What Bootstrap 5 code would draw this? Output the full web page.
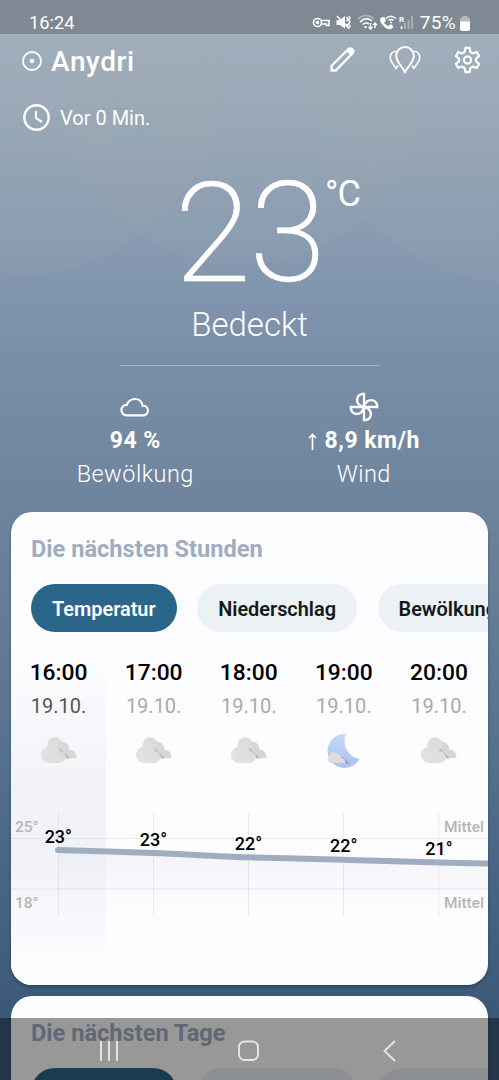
<!DOCTYPE html>
<html lang="de">
<head>
<meta charset="utf-8">
<meta name="viewport" content="width=device-width, initial-scale=1">
<title>Wetter Anydri</title>
<link href="https://cdn.jsdelivr.net/npm/bootstrap@5.3.0/dist/css/bootstrap.min.css" rel="stylesheet">
<style>
html,body{height:1080px;overflow:hidden}
body{font-family:Roboto,"Liberation Sans",sans-serif;line-height:1;color:#fff;white-space:nowrap}
svg{display:block;flex:none}
.app-screen{height:1080px;isolation:isolate;background:linear-gradient(#a1afc0 34px,#98a8b9 110px,#8d9fb3 200px,#8296ae 280px,#7a8fa8 350px,#6e849d 500px,#5c7691 700px,#456382 900px,#3c5a78 1010px)}
.sky{z-index:-1}
.status-bar{height:34px;background:#7f8994;padding:12px 28px 0 29px;font-size:18.3px}
.status-icons{height:22px}
.top-bar{height:54px;padding:0 18px 0 22px}
.place{font-size:28px;font-weight:500;letter-spacing:.6px;margin-left:9px;line-height:52px;padding-top:1px}
.updated{height:58px;padding-left:23px;font-size:20px}
.now{height:155px}
.deg{font-size:139px;font-weight:200;line-height:116px;letter-spacing:-1.5px;padding-top:30px;-webkit-text-stroke:.6px #fff}
.unit{left:325px;top:30px;font-size:36px;font-weight:400;letter-spacing:-1px}
.cond{height:64px;font-size:33px;font-weight:300;line-height:48px}
.rule{width:260px;height:1px;background:#ffffff50;margin:0 auto}
.stats{height:146px;padding:25px 21px 0}
.stat-val{font-size:23px;font-weight:700;line-height:36px;letter-spacing:.5px}
.stat-name{font-size:23.5px;font-weight:300;line-height:30px;letter-spacing:.45px}
.panel{margin:0 11px;border-radius:21px;background:#fdfdff;box-shadow:0 2px 3px #0d264566}
.hours-panel{height:473px}
.days-panel{height:120px;margin-top:11px}
.panel-title{height:72px;padding:25px 20px 0;font-size:23.6px;line-height:25px;font-weight:700;color:#9fadc1}
.pills{gap:20.5px;padding-left:20px}
.chip{height:48px;padding:0 21px;border-radius:24px;background:#ebf1f4;color:#14181b;font-size:19.9px;font-weight:600;line-height:51px;flex:none}
.chip.on{background:#2a658a;color:#fff}
.hour{width:95.1px;flex:none;padding-top:24px;text-align:center;color:#aaa;height:353px}
.hour.cur{color:#555;background:linear-gradient(#fdfdff 5%,#f2f3f8 45%,#f2f3f8 65%,#fdfdff 96%)}
.hour-time{color:#000;font-size:22.8px;font-weight:500;line-height:33px}
.dt{font-size:20px;line-height:34px}
.hour svg{margin:14px auto 0}
.hour .moon{margin-top:11px}
.chart{left:0;top:278px}
.nav-shade{left:0;bottom:0;height:62px;background:#00000066}
</style>
<script src="https://cdn.jsdelivr.net/npm/bootstrap@5.3.0/dist/js/bootstrap.bundle.min.js"></script>
</head>
<body>
<svg width="0" height="0" class="position-absolute"><defs>
<linearGradient id="cl" x1="0" y1="26" x2="24" y2="4" gradientUnits="userSpaceOnUse"><stop offset="0" stop-color="#e3e3e3"/><stop offset="1" stop-color="#dadad8"/></linearGradient>
<linearGradient id="mo" x1="0" y1="0" x2="0" y2="1"><stop offset="0" stop-color="#c5d8f7"/><stop offset="1" stop-color="#abc2f1"/></linearGradient>
<linearGradient id="fade" x1="0" y1="0" x2="0" y2="1"><stop offset="0" stop-color="#e9e9f2" stop-opacity=".6"/><stop offset="1" stop-color="#f4f4fa" stop-opacity="0"/></linearGradient>
<symbol id="cloud" viewBox="0 0 36 26"><path d="M17 5C22 3 28.500 6 28.500 13C32 12.500 35.500 15 35.500 21H18Z" fill="#d6d6d4"/><g fill="url(#cl)"><circle cx="8" cy="18" r="8"/><circle cx="14" cy="7.800" r="7.600"/><circle cx="18" cy="19" r="7"/><path d="M7 8H20V19L18 26H8L5 14Z"/></g><path d="M17.500 10L29 21.500H25.500C25 18 23 15.500 20 14L17.800 14.500L19 13Z" fill="#b3b3b2"/></symbol>
</defs></svg>
<main class="app-screen position-relative overflow-hidden">
<svg class="sky position-absolute top-0 start-0" width="499" height="512" fill="#aab4b0" fill-opacity=".1">
<circle cx="17" cy="70" r="206"/><circle cx="242" cy="86" r="180"/><circle cx="520" cy="66" r="217"/>
<g fill-opacity=".05"><circle cx="60" cy="-12" r="160"/><circle cx="235" cy="4" r="156"/><circle cx="440" cy="36" r="144"/></g>
</svg>

<header class="status-bar d-flex justify-content-between align-items-start"><span style="line-height:22px">16:24</span>
<div class="status-icons d-flex align-items-center">
<svg width="108" height="22" viewBox="312 12 108 22" fill="none" stroke="#fff" stroke-width="1.600">
<circle cx="317.500" cy="22.500" r="4"/><circle cx="317.500" cy="22.500" r="1" fill="#fff"/><path d="M321 20.500H329V25.500H326.500V24H321"/>
<path d="M336.500 20H340L345 16V28.500L340 25H336.500Z" fill="#fff" stroke="none"/><path d="M337 16L349 28.500" stroke-width="1.700"/><path d="M346.500 17L348 19L346.500 21M346.500 24L348 26M349 16L350 18L348.500 20L350 22L348.500 24L350 26L349 28" stroke-width="1.400"/>
<path d="M358 19C363 14.500 369 14.500 374 19" opacity=".4"/><path d="M360 22C364 18 368.500 18 372 21M362.500 24.500C365 22.500 367 22.500 369 24"/><circle cx="365.500" cy="27" r="1.200" fill="#fff" stroke="none"/><path d="M370.500 23V28.500M368.500 27L370.500 29L372.500 27M375 28V23M373 25L375 23L377 25" stroke-width="1.400"/>
<path d="M381 17.500L384.500 17L386 21L384 22.500C385 24.500 386.500 25.500 388.500 26L390.500 24L393.500 26.500C391.500 30.500 387 29.500 384 26.500C380.500 23 379 20 381 17.500Z" fill="#fff" stroke="none"/><path d="M386 18.500C389 15.500 392.500 15.500 396 18.500M388.500 20.500C390.500 19 392 19 393.500 20.500" stroke-width="1.400"/><circle cx="391" cy="22.500" r="1" fill="#fff" stroke="none"/>
<text x="399" y="21.500" font-size="8" font-weight="700" fill="#fff" stroke="none">R</text><path d="M401.500 26V29" stroke-width="1.500"/><path d="M405 23V29M408.500 19.500V29M412 16V29" opacity=".38" stroke-width="1.700"/>
</svg><span style="line-height:22px;font-size:19px;letter-spacing:.3px">75%</span>
<svg style="margin-left:4px;margin-right:1px" width="10" height="15" viewBox="0 0 10 15"><path d="M2.500 0H7.500V1.500C9 1.500 10 2 10 3.500V6H0V3.500C0 2 1 1.500 2.500 1.500Z" fill="#fff" opacity=".42"/><path d="M0 5.500H10V13Q10 15 8 15H2Q0 15 0 13Z" fill="#fff"/></svg>
</div></header>

<div class="top-bar d-flex align-items-center justify-content-between">
<div class="d-flex align-items-center"><svg width="20" height="20" viewBox="0 0 20 20"><circle cx="10" cy="10" r="9" fill="none" stroke="#fff" stroke-width="1.800"/><circle cx="10" cy="10" r="2.300" fill="#fff"/></svg><span class="place">Anydri</span></div>
<div class="d-flex align-items-center" style="height:54px;padding-bottom:3px">
<svg width="25" height="25" viewBox="0 0 24 24" fill="none" stroke="#fff" stroke-width="2.300" stroke-linejoin="round"><path d="M1.500 22.500V18L17.800 1.900Q19.500.7 21.200 2.100T22.100 5.500L5.700 22.500Z"/><path d="M15.500 3.800L20.200 8.500L22.500 5.500Q23.500 3 21 1.600T18 1.800Z" fill="#fff" stroke="none"/></svg>
<svg style="margin-left:34px" width="32" height="28" viewBox="0 0 32 28" fill="none" stroke="#fff" stroke-width="2" stroke-linejoin="round"><path d="M16 26.500C14.500 21 7.200 17 7.200 9.800A8.800 8.800 0 0 1 24.800 9.800C24.800 17 17.500 21 16 26.500Z"/><path d="M7 5.200C3 5.500 1.200 8 1.200 12C1.200 16 5 18 7 22.500L9 19.500M25 5.200C29 5.500 30.800 8 30.800 12C30.800 16 27 18 25 22.500L23 19.500" stroke-width="1.600"/></svg>
<svg style="margin-left:33px" width="27" height="28" viewBox="0 0 28 28" fill="none" stroke="#fff" stroke-width="2.300" stroke-linejoin="round"><path d="M11.800 1.500H16.200L17 5.800L19.600 7.200L23.500 5.700L26 10L22.800 12.600V15.400L26 18L23.500 22.300L19.600 20.800L17 22.200L16.200 26.500H11.800L11 22.200L8.400 20.800L4.500 22.300L2 18L5.200 15.400V12.600L2 10L4.500 5.700L8.400 7.200L11 5.800Z"/><circle cx="14" cy="14" r="3.700"/></svg>
</div></div>

<div class="updated d-flex align-items-center"><svg width="27" height="27" viewBox="0 0 27 27" fill="none" stroke="#fff"><circle cx="13.500" cy="13.500" r="12.200" stroke-width="2.400"/><path d="M13 7V14L19 18" stroke-width="2.200"/></svg><span style="margin-left:10px;padding-top:2px">Vor 0 Min.</span></div>

<section class="now position-relative text-center"><div class="deg">23</div><span class="unit position-absolute">°C</span></section>
<div class="cond text-center">Bedeckt</div>
<div class="rule"></div>
<section class="stats row g-0 text-center">
<div class="col-6"><svg class="mx-auto" width="30" height="32" viewBox="0 0 30 32" fill="none" stroke="#fff" stroke-width="2.200"><path d="M6.500 24.300A5.200 5.200 0 0 1 6.800 13.800Q9 8 15 8Q21.500 8 22.700 14.800A4.800 4.800 0 0 1 24 24.300Z"/></svg><div class="stat-val">94 %</div><div class="stat-name">Bewölkung</div></div>
<div class="col-6"><svg class="mx-auto" width="30" height="32" viewBox="0 0 30 32" fill="none" stroke="#fff" stroke-width="2.300"><path d="M15 16V2.800H13.500C8.500 3.500 6.500 9 9.500 13Q11.500 15.500 15 16H28.200V14.500C27.500 9.500 22 7.500 18 10.500Q15.500 12.500 15 16V29.200H16.500C21.500 28.500 23.500 23 20.500 19Q18.500 16.500 15 16H1.800V17.500C2.500 22.500 8 24.500 12 21.500Q14.500 19.500 15 16"/></svg><div class="stat-val"><svg class="d-inline-block" style="margin-right:8px" width="9" height="17" viewBox="0 0 9 17" fill="none" stroke="#fff" stroke-width="1.700"><path d="M4.500 17V1.500M1 5L4.500 1.500L8 5"/></svg>8,9 km/h</div><div class="stat-name">Wind</div></div>
</section>

<section class="panel hours-panel position-relative overflow-hidden">
<div class="panel-title">Die nächsten Stunden</div>
<div class="pills d-flex"><span class="chip on">Temperatur</span><span class="chip">Niederschlag</span><span class="chip">Bewölkung</span></div>
<div class="d-flex">
<div class="hour cur"><div class="hour-time">16:00</div><div class="dt">19.10.</div><svg width="36" height="26"><use href="#cloud"/></svg></div>
<div class="hour"><div class="hour-time">17:00</div><div class="dt">19.10.</div><svg width="36" height="26"><use href="#cloud"/></svg></div>
<div class="hour"><div class="hour-time">18:00</div><div class="dt">19.10.</div><svg width="36" height="26"><use href="#cloud"/></svg></div>
<div class="hour"><div class="hour-time">19:00</div><div class="dt">19.10.</div><svg class="moon" width="36" height="34" viewBox="0 0 36 34"><path d="M20 0A17 17 0 1 0 33.500 25A18 18 0 0 1 20 0Z" fill="url(#mo)"/><path d="M13 23L21 30H24L17 23Z" fill="#92a7cc"/><g transform="translate(0 18) scale(.54 .46)"><path d="M18 5C25 3 28 7 28 13C32 12 35.500 15 35.500 24H8A8 8 0 0 1 6.500 10C6 4 10 0 14 0C18 0 20.500 2 21 5Z" fill="#dcdcda"/></g></svg></div>
<div class="hour"><div class="hour-time">20:00</div><div class="dt">19.10.</div><svg width="36" height="26"><use href="#cloud"/></svg></div>
</div>
<svg class="chart position-absolute" width="477" height="195" viewBox="11 790 477 195">
<path d="M58 850L153.500 853L248.500 857.500L343.500 860L488 863.500V917H58Z" fill="url(#fade)"/>
<path d="M11 838.500H488M11 889H488M58.500 813V917M153.500 813V917M248.500 813V917M343.500 813V917M439 813V917" stroke="#000" stroke-opacity=".065" fill="none"/>
<path d="M58 850C90 851 120 852 153.500 853C185 854 215 856.500 248.500 857.300S310 859 343.500 859.700S400 862 492 863.500" stroke="#9fadc1" stroke-width="6" stroke-linecap="round" fill="none"/>
<g font-size="15.500" font-weight="500" fill="#b5b5b5"><text x="15" y="832">25°</text><text x="15" y="907.500">18°</text><text x="484" y="832" text-anchor="end">Mittel</text><text x="484" y="907.500" text-anchor="end">Mittel</text></g>
<g font-size="18" font-weight="500" fill="#000" text-anchor="middle"><text x="58.300" y="842.500">23°</text><text x="153.500" y="845.500">23°</text><text x="248.500" y="850">22°</text><text x="343.700" y="852">22°</text><text x="439" y="855">21°</text></g>
</svg>
</section>

<section class="panel days-panel overflow-hidden"><div class="panel-title">Die nächsten Tage</div>
<div class="pills d-flex"><span class="chip on">Temperatur</span><span class="chip">Niederschlag</span><span class="chip">Bewölkung</span></div></section>

<nav class="nav-shade position-absolute w-100"><svg width="499" height="62" viewBox="0 1018 499 62" fill="none" stroke="#e6e6e6" stroke-width="1.900"><path d="M101 1041V1061M109 1041V1061M117 1041V1061M395 1041L384.500 1051L395 1061"/><rect x="239" y="1041.500" width="19" height="18.500" rx="5.500"/></svg></nav>
</main>
</body>
</html>
